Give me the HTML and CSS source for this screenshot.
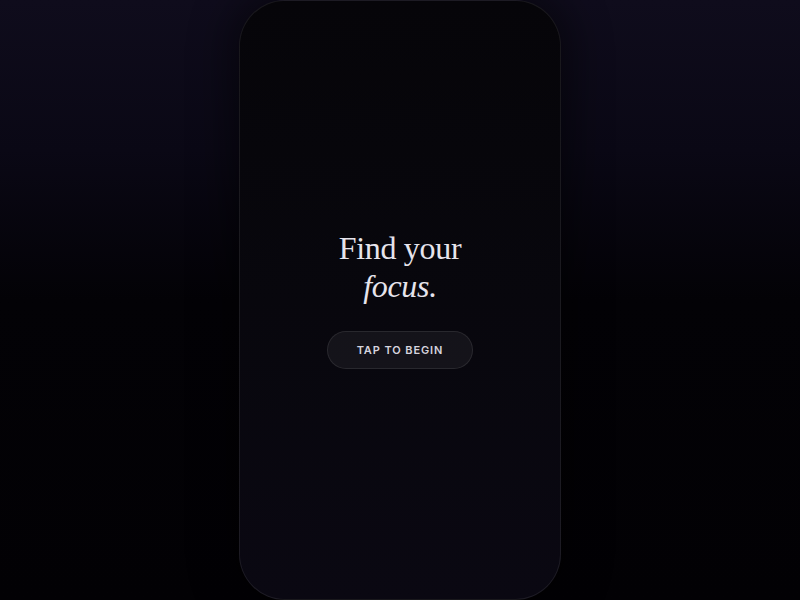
FILE: index.html
```html
<!DOCTYPE html>
<html lang="en">
<head>
<meta charset="utf-8">
<title>Find your focus</title>
<link rel="stylesheet" href="styles.css">
</head>
<body>
<main class="stage">
  <section class="phone">
    <div class="intro">
      <h1 class="title">Find your<br><em>focus.</em></h1>
      <button class="begin" type="button">TAP TO BEGIN</button>
    </div>
  </section>
</main>
</body>
</html>
```
FILE: styles.css
```css
html, body {
  margin: 0;
  height: 100%;
}
body {
  background: linear-gradient(180deg, #0f0c1c 0%, #0a0815 25%, #030206 50%, #020104 100%);
  font-family: "Liberation Sans", Arial, sans-serif;
}
.stage {
  height: 100%;
  display: flex;
  justify-content: center;
}
.phone {
  box-sizing: border-box;
  width: 322px;
  height: 600px;
  border: 1px solid rgba(255, 255, 255, 0.08);
  border-radius: 46px;
  background: linear-gradient(180deg, #060509 0%, #08070d 50%, #0a0812 100%);
  box-shadow: 0 0 40px 10px rgba(0, 0, 0, 0.45);
  display: flex;
  align-items: center;
  justify-content: center;
}
.intro {
  display: flex;
  flex-direction: column;
  align-items: center;
  gap: 26px;
  margin-top: -2px;
}
.title {
  margin: 0;
  font-family: "Liberation Serif", "Times New Roman", serif;
  font-weight: 400;
  font-size: 32px;
  line-height: 38px;
  color: #e6e4ec;
  text-align: center;
  letter-spacing: -0.3px;
}
.title em {
  font-style: italic;
}
.begin {
  width: 146px;
  height: 38px;
  border-radius: 19px;
  border: 1px solid rgba(255, 255, 255, 0.09);
  background: rgba(255, 255, 255, 0.05);
  color: #d6d4de;
  font-family: Inter, "Liberation Sans", Arial, sans-serif;
  font-weight: 600;
  font-size: 11px;
  letter-spacing: 0.9px;
  padding: 0;
  cursor: pointer;
}
```
